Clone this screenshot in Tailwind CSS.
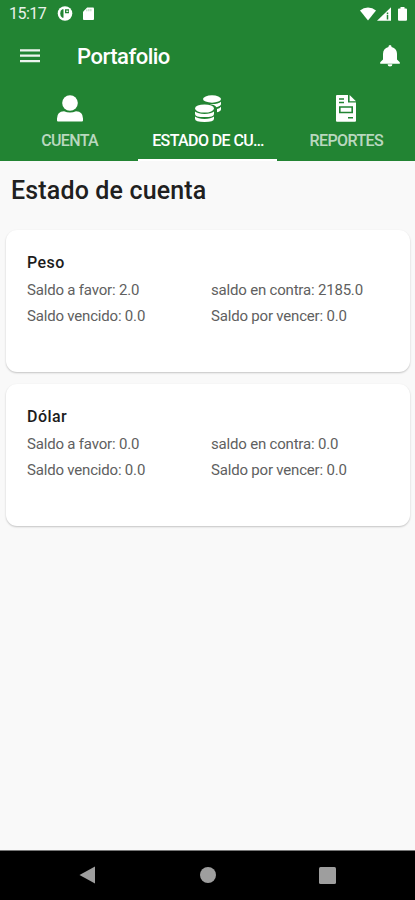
<!DOCTYPE html>
<html lang="es">
<head>
<meta charset="utf-8">
<meta name="viewport" content="width=device-width, initial-scale=1">
<title>Portafolio</title>
<script src="https://cdn.jsdelivr.net/npm/@tailwindcss/browser@4"></script>
</head>
<body class="font-[Roboto,sans-serif]">
<div class="flex h-[900px] w-[415px] flex-col overflow-hidden bg-[#f9f9f9]">
  <header class="h-[161px] shrink-0 bg-[#228433] text-white">
    <div class="flex h-7 items-center pl-[9px] pr-[7px]">
      <span class="w-12 text-[16px] leading-7 tracking-[-0.5px] text-white/90">15:17</span>
      <svg class="h-4 w-4" viewBox="0 0 16 16"><circle cx="8" cy="7.500" r="7.300" fill="#fff"/><path d="M6.500 3.300H5.300Q3.200 4.300 3.200 7.500t2.100 4.200h1.200zM8 3.300h4v3.900H8z" fill="#228433"/><path d="M9.300 4.600h2v1.300h-2z" fill="#fff"/></svg>
      <svg class="ml-2.5 h-4 w-[11px]" viewBox="0 0 12 16"><path d="M4.500 1H11a1 1 0 0 1 1 1V13.500a1 1 0 0 1-1 1H1a1 1 0 0 1-1-1V5.500z" fill="#fff"/><path d="M4.200 3v2M6.400 2.500v2.500M8.600 2.500v2.500" stroke="#228433" stroke-opacity=".45" stroke-width=".9"/></svg>
      <svg class="ml-auto h-[15px] w-4" viewBox="0 0 16 15"><path d="M8 13.500 0 3.600Q3.500.5 8 .5t8 3.100z" fill="#fff"/></svg>
      <svg class="ml-px h-[15px] w-3.5" viewBox="0 0 14 15"><path d="M14 .2v13.500H0z" fill="#fff"/><path d="M10.500 5.500v1.800M10.500 8v4.500" stroke="#228433" stroke-width="1.500"/></svg>
      <svg class="ml-[7px] mr-px h-[15px] w-[9px]" viewBox="0 0 9 15"><path d="M2.500 0h4v1.500H8a1 1 0 0 1 1 1v10.200a1 1 0 0 1-1 1H1a1 1 0 0 1-1-1V2.500a1 1 0 0 1 1-1h1.500z" fill="#fff"/></svg>
    </div>
    <div class="flex h-[57px] items-center pl-5 pr-[15px]">
      <svg class="h-4 w-5" viewBox="0 0 20 16"><path d="M0 1.300h20M0 6.700h20M0 12.100h20" stroke="#fff" stroke-width="2.300" stroke-opacity=".92"/></svg>
      <h1 class="ml-[37px] text-[22px] font-medium leading-[57px] tracking-[-0.5px]">Portafolio</h1>
      <svg class="ml-auto h-[23px] w-5" viewBox="0 0 20 23"><path d="M10 0a1.500 1.500 0 0 1 1.500 1.500v.6c3.700.8 5.500 3.600 5.500 7v5.400l2.800 2.700v1.500H.2v-1.500L3 14.500V9.100c0-3.400 1.800-6.200 5.500-7v-.6A1.500 1.500 0 0 1 10 0zM7.600 19.200h4.800a2.400 2.400 0 0 1-4.800 0z" fill="#fff"/></svg>
    </div>
    <nav class="grid h-[76px] grid-cols-3 text-center text-[16px] font-medium leading-5">
      <div class="flex flex-col items-center pl-px pt-[9px] text-white/70">
        <svg class="h-[29px] w-7" viewBox="0 0 28 29"><circle cx="14" cy="9" r="7.800" fill="#fff"/><path d="M1 26.500V24.500Q1 17.500 8 17.200q6 2.400 12 0 7 .3 7 7.300v2q0 1-1 1H2q-1 0-1-1z" fill="#fff"/></svg>
        <span class="mt-2 tracking-[-0.65px]">CUENTA</span>
      </div>
      <div class="flex flex-col items-center border-b-2 border-white pl-px pt-[9px]">
        <svg class="h-[29px] w-7" viewBox="0 0 28 29" fill="#fff"><ellipse cx="18" cy="5" rx="9" ry="3.700"/><path d="M27 7.700v2.400q0 2-4.500 3.200-2-2.700-7-3.300 8.500.5 11.500-2.300zM27 12.800v2.400q0 2-4 3.100v-3.200q2.500-.7 4-2.300z"/><ellipse cx="10.500" cy="14.500" rx="9.500" ry="4.100"/><path d="M1 17.600q3 2.400 9.500 2.400t9.500-2.400v2.300q0 3.200-9.500 3.200T1 19.900zM1 22.500q3 2.400 9.500 2.400t9.500-2.400v2.300q0 3.200-9.500 3.200T1 24.800z"/></svg>
        <span class="mt-2 whitespace-nowrap tracking-[-0.6px]">ESTADO DE CU…</span>
      </div>
      <div class="flex flex-col items-center pl-px pt-[9px] text-white/70">
        <svg class="h-[29px] w-[22px]" viewBox="0 0 22 29"><path d="M2 1h11v7.500h8V26.700a1 1 0 0 1-1 1H2a1 1 0 0 1-1-1V2a1 1 0 0 1 1-1zM14.600 1l6.400 6.200h-6.400z" fill="#fff"/><path d="M4 5.100h5M4 8.600h5M13 23.700h5" stroke="#228433" stroke-width="1.500"/><path d="M4.800 13h12.400v5.500H4.800z" fill="none" stroke="#228433" stroke-width="1.600"/></svg>
        <span class="mt-2 tracking-[-0.6px]">REPORTES</span>
      </div>
    </nav>
  </header>
  <main class="flex-1 pl-1.5 pr-[5px]">
    <h2 class="h-[69px] pl-[5px] pt-3 text-[25px] font-medium leading-9 tracking-[0.15px] text-[#202020]">Estado de cuenta</h2>
    <section class="h-[142px] rounded-[11px] bg-white px-[21px] pt-5 shadow-[0_1px_2px_rgba(0,0,0,0.22)]">
      <h3 class="text-[16px] font-medium leading-[26px] tracking-[0.45px] text-[#1c1c1c]">Peso</h3>
      <div class="grid grid-cols-[184px_1fr] pt-px text-[15px] leading-[26px] tracking-[-0.19px] text-[#606060]">
        <span>Saldo a favor: 2.0</span><span>saldo en contra: 2185.0</span>
        <span>Saldo vencido: 0.0</span><span>Saldo por vencer: 0.0</span>
      </div>
    </section>
    <section class="mt-3 h-[142px] rounded-[11px] bg-white px-[21px] pt-5 shadow-[0_1px_2px_rgba(0,0,0,0.22)]">
      <h3 class="text-[16px] font-medium leading-[26px] tracking-[0.45px] text-[#1c1c1c]">Dólar</h3>
      <div class="grid grid-cols-[184px_1fr] pt-px text-[15px] leading-[26px] tracking-[-0.19px] text-[#606060]">
        <span>Saldo a favor: 0.0</span><span>saldo en contra: 0.0</span>
        <span>Saldo vencido: 0.0</span><span>Saldo por vencer: 0.0</span>
      </div>
    </section>
  </main>
  <footer class="h-[50px] shrink-0 border-t border-[#777] bg-black">
    <svg class="h-[49px] w-full" viewBox="0 0 415 49" fill="#9e9e9e"><path d="M79.500 24 95 15.500v17z"/><circle cx="208" cy="24" r="8"/><rect x="319" y="16" width="17" height="17" rx="1.500"/></svg>
  </footer>
</div>
</body>
</html>
